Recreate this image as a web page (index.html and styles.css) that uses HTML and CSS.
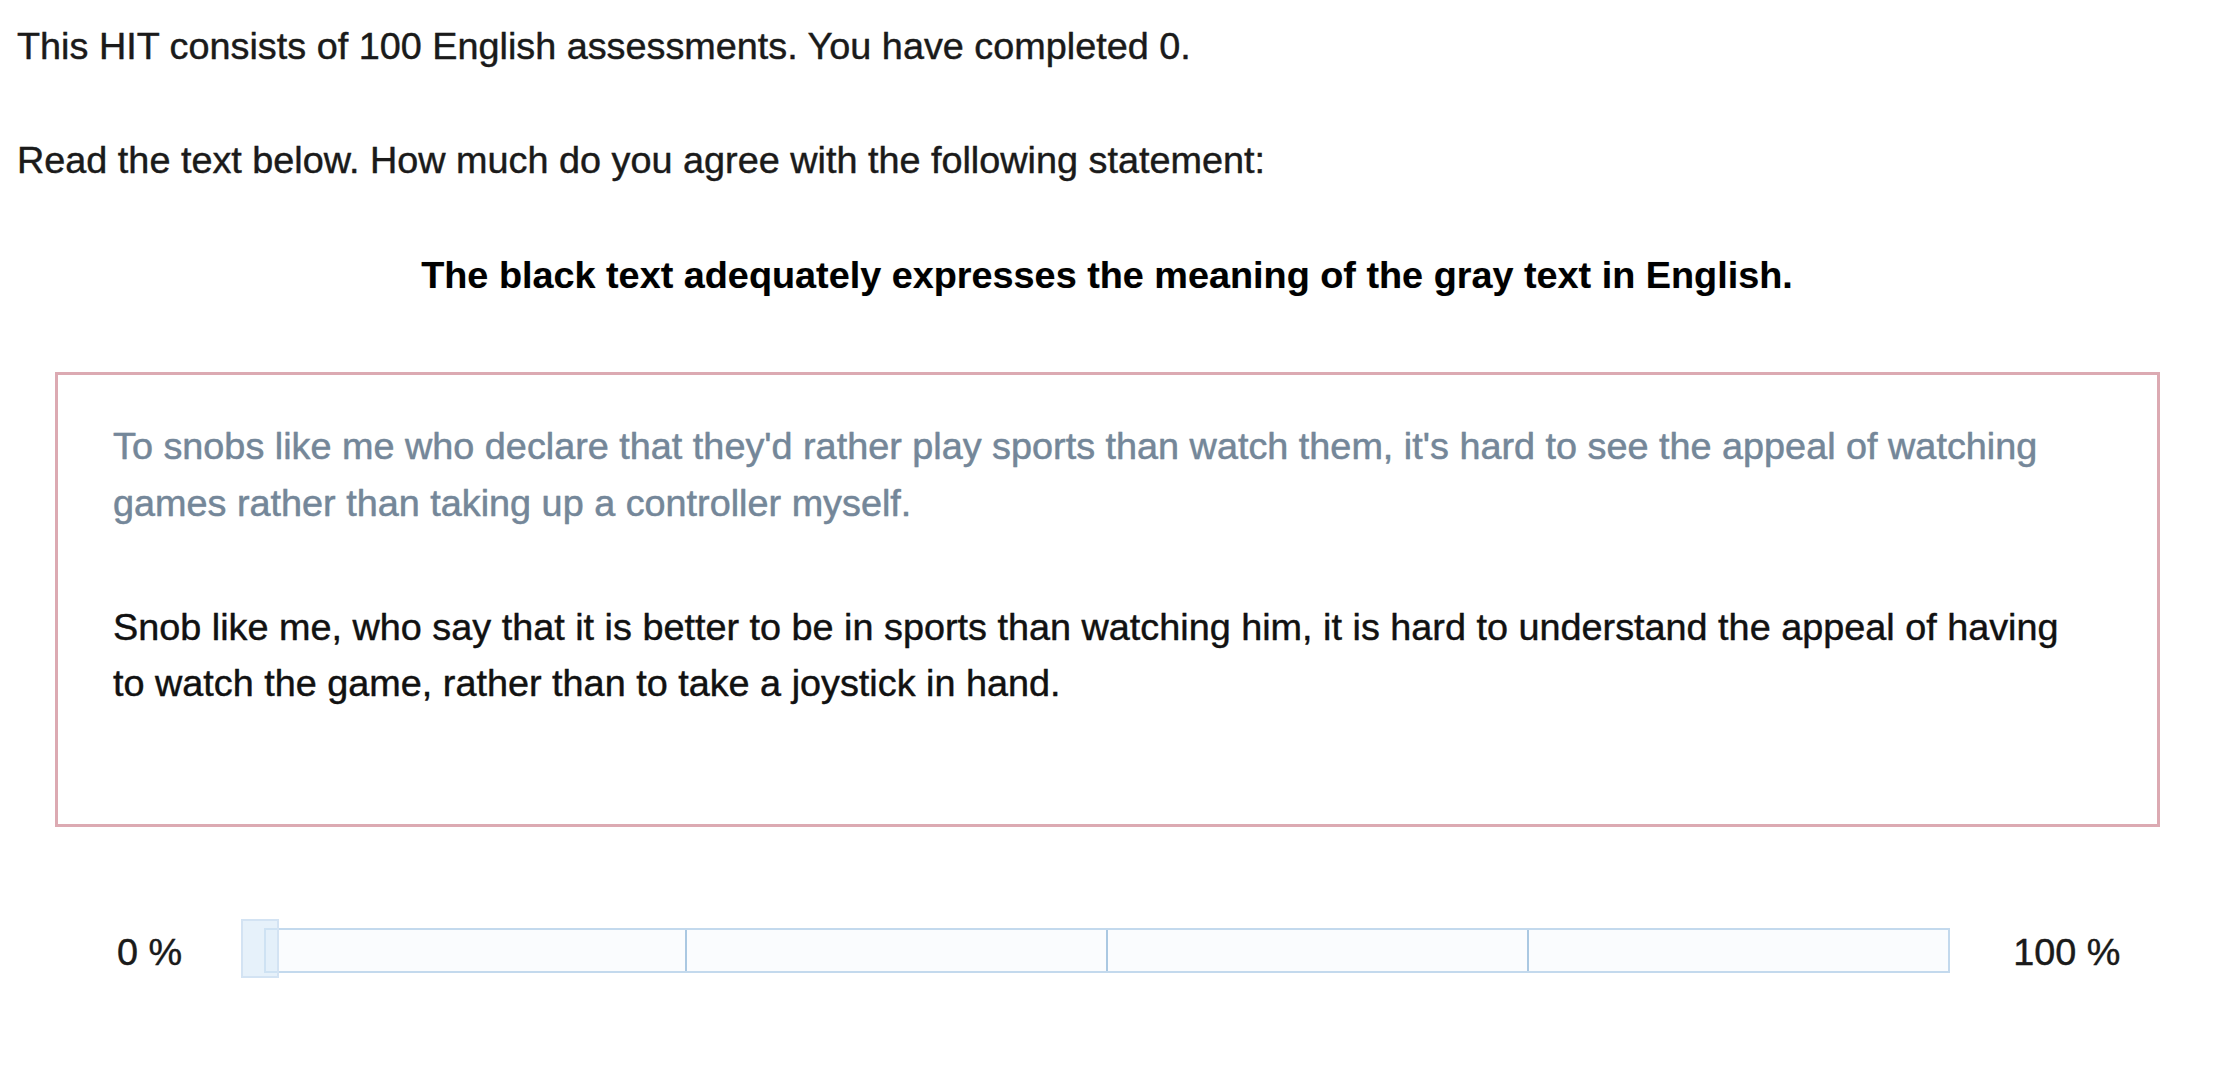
FILE: index.html
```html
<!DOCTYPE html>
<html>
    <head>
        <meta charset="utf-8">
        <meta name="viewport" content="width=device-width, initial-scale=1">
        <title>English assessment</title>
        <link rel="stylesheet" href="styles.css">
    </head>
    <body>
        <p class="intro">This HIT consists of 100 English assessments. You have completed 0.</p>
        <p class="intro">Read the text below. How much do you agree with the following statement:</p>
        <p class="statement">The black text adequately expresses the meaning of the gray text in English.</p>

        <div class="segment">
            <p class="source">To snobs like me who declare that they'd rather play sports than watch them, it's hard to see the appeal of watching games rather than taking up a controller myself.</p>
            <p class="target">Snob like me, who say that it is better to be in sports than watching him, it is hard to understand the appeal of having to watch the game, rather than to take a joystick in hand.</p>
        </div>

        <div class="scale">
            <span class="label">0 %</span>
            <div class="slider">
                <div class="track">
                    <span class="part"></span>
                    <span class="part"></span>
                    <span class="part"></span>
                    <span class="part"></span>
                </div>
                <span class="handle"></span>
            </div>
            <span class="label label-end">100 %</span>
        </div>
    </body>
</html>
```

FILE: styles.css
```css
body {
    font-family: "Liberation Sans", Arial, Helvetica, sans-serif;
    font-size: 37.8px;
    line-height: 56.4px;
    color: #1a1a1a;
    -webkit-text-stroke: 0.35px;
    text-shadow: 0 0 1px rgba(0, 0, 0, 0.25);
    margin: 0;
    padding: 18px 0 40px 17px;
}
p {
    margin: 0;
}
.intro {
    margin-bottom: 58px;
}
.statement {
    font-weight: bold;
    color: #000;
    -webkit-text-stroke: 0;
    text-align: center;
    margin-right: 17px;
}
.segment {
    margin: 69px 54px 0 38px;
    border: 3px solid #dcaab2;
    padding: 43px 80px 112px 55px;
}
.source {
    color: #74879a;
    margin-bottom: 68px;
}
.target {
    color: #111;
}
.scale {
    display: flex;
    align-items: center;
    height: 59px;
    margin-top: 94px;
    padding-left: 100px;
}
.label {
    color: #1a1a1a;
    padding-top: 3px;
}
.slider {
    position: relative;
    width: 1686px;
    margin-left: 82px;
}
.track {
    display: flex;
    height: 41px;
    border: 2px solid #c3d9ed;
    background: #fafcfe;
}
.part {
    flex: 1;
}
.part + .part {
    border-left: 2px solid #aac8e2;
}
.handle {
    position: absolute;
    left: -23px;
    top: -9px;
    width: 34px;
    height: 55px;
    border: 2px solid #d3e3f3;
    background: rgba(214, 231, 247, 0.6);
}
.label-end {
    margin-left: 63px;
}
```
